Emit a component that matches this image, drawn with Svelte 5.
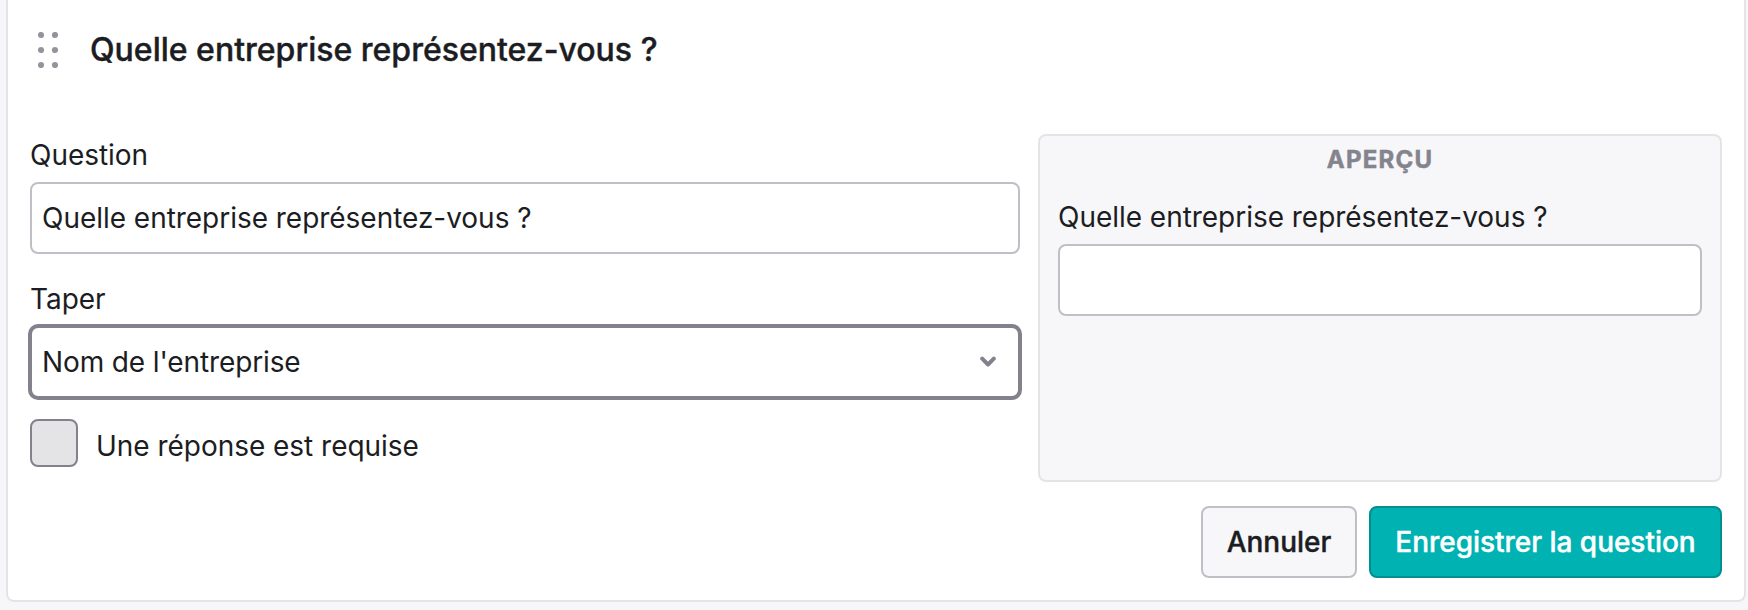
<script>
  let question = $state("Quelle entreprise représentez-vous ?");
  let type = $state("company");
  let required = $state(false);

  const types = [{ value: "company", label: "Nom de l'entreprise" }];

  // Drag handle dots
  const dots = [
    [3, 3],
    [17, 3],
    [3, 18],
    [17, 18],
    [3, 33],
    [17, 33],
  ];
</script>

<section class="card">
  <header class="card-header">
    <svg class="handle" width="20" height="36" viewBox="0 0 20 36">
      {#each dots as [x, y]}
        <circle cx={x} cy={y} r="3.1" />
      {/each}
    </svg>
    <h2>{question}</h2>
  </header>

  <div class="columns">
    <div class="form">
      <label class="label" for="question">Question</label>
      <input id="question" class="field" type="text" bind:value={question} />

      <label class="label label-type" for="type">Taper</label>
      <div class="select-wrap">
        <select id="type" class="field select" bind:value={type}>
          {#each types as item}
            <option value={item.value}>{item.label}</option>
          {/each}
        </select>
        <svg class="chevron" width="16" height="12" viewBox="0 0 16 12">
          <path d="M2.2 2.7 L8 8.5 L13.8 2.7" />
        </svg>
      </div>

      <label class="check">
        <input type="checkbox" bind:checked={required} />
        <span>Une réponse est requise</span>
      </label>
    </div>

    <aside class="preview">
      <div class="preview-title">Aperçu</div>
      <label class="label" for="answer">{question}</label>
      <input id="answer" class="field" type="text" />
    </aside>
  </div>

  <footer class="actions">
    <button class="button">Annuler</button>
    <button class="button primary">Enregistrer la question</button>
  </footer>
</section>

<style>
  :global(body) {
    background: #f7f7f9;
    height: 610px;
    overflow: hidden;
  }

  .card {
    box-sizing: border-box;
    width: 1740px;
    height: 602px;
    margin-left: 6px;
    padding: 0 22px;
    background: #fff;
    border: 2px solid #e4e4e6;
    border-top: none;
    border-radius: 0 0 8px 8px;
    font-family: Inter, sans-serif;
    font-size: 28px;
    letter-spacing: -0.03px;
    color: #1b1d23;
  }

  .card-header {
    display: flex;
    align-items: center;
    height: 100px;
    margin-bottom: 34px;
    padding-left: 8px;
  }

  .handle {
    fill: #94949d;
  }

  h2 {
    margin: 0 0 0 32px;
    font-size: 32px;
    font-weight: 500;
    line-height: 40px;
    letter-spacing: 0;
    -webkit-text-stroke: 0.4px currentColor;
  }

  .columns {
    display: grid;
    grid-template-columns: 990px 684px;
    gap: 18px;
    height: 348px;
  }

  .label {
    box-sizing: border-box;
    display: block;
    height: 40px;
    margin-bottom: 8px;
    line-height: 42px;
  }

  .label-type {
    margin-top: 24px;
  }

  .field {
    box-sizing: border-box;
    display: block;
    width: 100%;
    height: 72px;
    margin: 0;
    padding: 0 10px;
    border: 2px solid #bfbfc5;
    border-radius: 8px;
    background: #fff;
    font: inherit;
    letter-spacing: inherit;
    color: inherit;
    outline: none;
  }

  .select-wrap {
    position: relative;
  }

  .select {
    appearance: none;
    border-color: #82828c;
    box-shadow: 0 0 0 2px #82828c;
    letter-spacing: -0.12px;
  }

  .chevron {
    position: absolute;
    top: 30px;
    right: 24px;
    fill: none;
    stroke: #82828c;
    stroke-width: 4;
    stroke-linecap: round;
    stroke-linejoin: round;
    pointer-events: none;
  }

  .check {
    display: flex;
    align-items: center;
    margin-top: 21px;
    height: 48px;
  }

  .check input {
    appearance: none;
    box-sizing: border-box;
    width: 48px;
    height: 48px;
    margin: 0 18px 0 0;
    border: 2px solid #82828c;
    border-radius: 8px;
    background: #e4e4e6;
  }

  .check span {
    padding-top: 5px;
  }

  .preview {
    box-sizing: border-box;
    padding: 6px 18px 0;
    border: 2px solid #e4e4e6;
    border-radius: 8px;
    background: #f7f7f9;
  }

  .preview-title {
    margin-bottom: 18px;
    font-size: 24px;
    font-weight: 700;
    line-height: 36px;
    letter-spacing: 1.2px;
    text-align: center;
    text-transform: uppercase;
    color: #84848e;
    -webkit-text-stroke: 0.5px currentColor;
  }

  .actions {
    display: flex;
    justify-content: flex-end;
    gap: 12px;
    margin-top: 24px;
  }

  .button {
    box-sizing: border-box;
    width: 156px;
    height: 72px;
    padding: 0;
    border: 2px solid #bfbfc5;
    border-radius: 8px;
    background: #f7f7f9;
    font: inherit;
    font-weight: 500;
    letter-spacing: -0.03px;
    color: inherit;
    -webkit-text-stroke: 0.4px currentColor;
  }

  .primary {
    width: 353px;
    border-color: #008f8f;
    background: #00b2b2;
    color: #fff;
  }
</style>
